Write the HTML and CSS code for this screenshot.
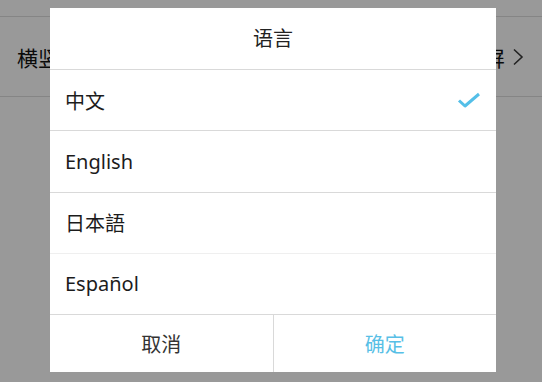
FILE: index.html
```html
<!DOCTYPE html>
<html lang="zh">
<head>
<meta charset="utf-8">
<link rel="stylesheet" href="styles.css">
</head>
<body>
<div class="page">
  <div class="settings-row">
    <span class="label">横竖屏切换</span>
    <span class="value">竖屏<svg class="chev" viewBox="0 0 12 18" width="12" height="18"><path d="M2 1.5 L10 9 L2 16.5" fill="none" stroke="#3a3a3a" stroke-width="1.6"/></svg></span>
  </div>
</div>
<div class="overlay">
  <div class="dialog">
    <div class="title">语言</div>
    <ul class="options">
      <li class="option">中文<svg class="check" viewBox="0 0 24 16" width="24" height="16"><path d="M2 8.5 L8 14 L22 2" fill="none" stroke="#54bfe8" stroke-width="3" stroke-linejoin="round"/></svg></li>
      <li class="option">English</li>
      <li class="option">日本語</li>
      <li class="option">Español</li>
    </ul>
    <div class="actions">
      <div class="btn cancel">取消</div>
      <div class="btn ok">确定</div>
    </div>
  </div>
</div>
</body>
</html>
```
FILE: styles.css
```css
* { box-sizing: border-box; }
html, body { margin: 0; padding: 0; }
body {
  width: 542px;
  height: 382px;
  overflow: hidden;
  background: #ffffff;
  font-family: "Noto Sans", "Noto Sans CJK SC", sans-serif;
  position: relative;
}
.page {
  padding-top: 16px;
}
.settings-row {
  height: 81px;
  border-top: 1px solid #dedede;
  border-bottom: 1px solid #dedede;
  display: flex;
  align-items: center;
  justify-content: space-between;
  padding: 0 17px 0 17px;
  font-size: 21px;
  color: #111;
}
.value { display: flex; align-items: center; gap: 7px; margin-right: 1px; }
.chev { display: block; }
.overlay {
  position: absolute;
  inset: 0;
  background: rgba(0, 0, 0, 0.4);
  padding: 8px 46px 10px 50px;
}
.dialog {
  background: #fff;
  width: 446px;
  height: 364px;
  display: flex;
  flex-direction: column;
}
.title {
  height: 62px;
  border-bottom: 1px solid #d9d9d9;
  display: flex;
  align-items: center;
  justify-content: center;
  font-size: 20px;
  color: #222;
  padding-bottom: 2px;
}
.options { list-style: none; margin: 0; padding: 0; }
.option {
  height: 61.25px;
  border-bottom: 1px solid #d9d9d9;
  display: flex;
  align-items: center;
  justify-content: space-between;
  padding: 0 15px 0 15px;
  font-size: 20px;
  color: #1c1c1c;
}
.option:nth-child(3) { border-bottom-color: #efefef; }
.check { display: block; }
.actions {
  flex: 1;
  display: flex;
}
.btn {
  flex: 1;
  display: flex;
  align-items: center;
  justify-content: center;
  font-size: 20px;
}
.cancel { color: #333; border-right: 1px solid #d9d9d9; }
.ok { color: #58bfe6; }
```
